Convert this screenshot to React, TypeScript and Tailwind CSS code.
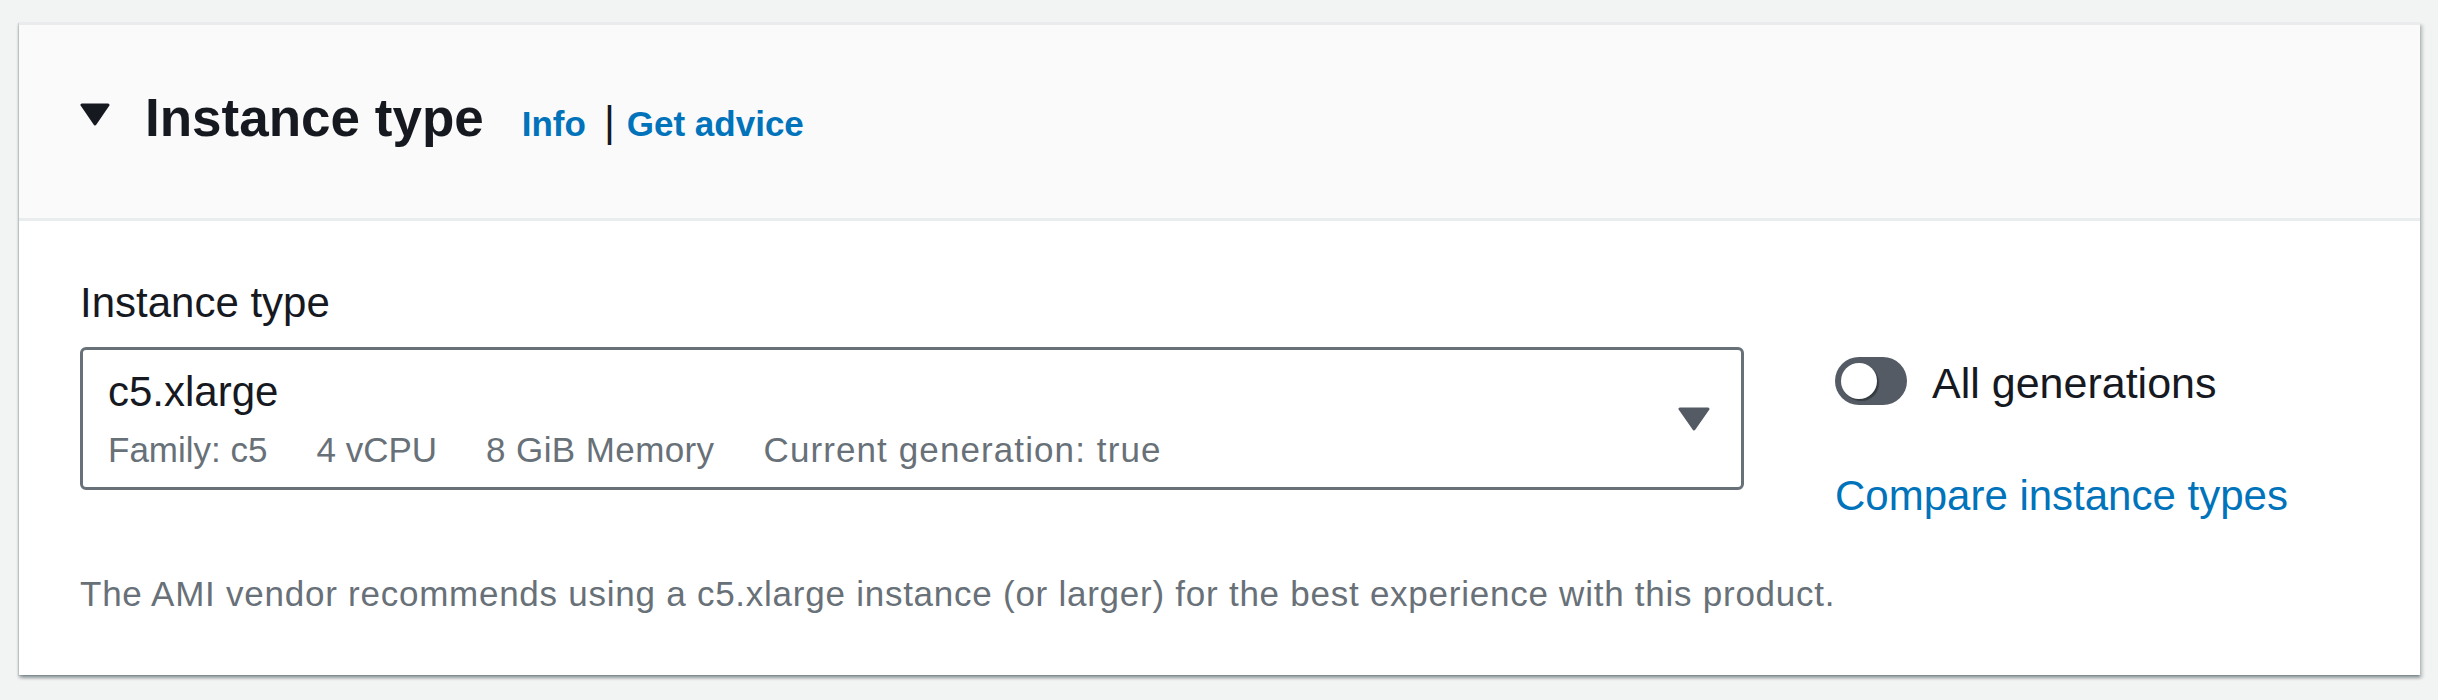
import React from "react";

function Caret({ w, h, color }: { w: number; h: number; color: string }) {
  return (
    <svg width={w} height={h} viewBox={`0 0 ${w} ${h}`} className="shrink-0">
      <path
        d={`M2 2 H${w - 2} L${w / 2} ${h - 2} Z`}
        fill={color}
        stroke={color}
        strokeWidth={3}
        strokeLinejoin="round"
      />
    </svg>
  );
}

export default function App() {
  return (
    <div
      className="w-[2438px] h-[700px] bg-[#f2f3f3] pt-[22px] pl-[19px]"
      style={{ fontFamily: '"Liberation Sans", Arial, sans-serif' }}
    >
      <div className="w-[2401px] bg-white border-t-[3px] border-[#e9ebed] shadow-[0_3px_3px_0_rgba(0,28,36,0.3),3px_3px_3px_0_rgba(0,28,36,0.15),-1px_1px_1px_0_rgba(0,28,36,0.12)]">
        {/* Header */}
        <div className="h-[196px] bg-[#fafafa] border-b-[3px] border-[#eaeded] flex items-center pl-[61px] pb-[8px]">
          <div className="mb-[6px]">
            <Caret w={30} h={23} color="#16191f" />
          </div>
          <div className="flex items-baseline ml-[35px]">
            <h2 className="text-[53px] leading-[60px] font-bold text-[#16191f]">Instance type</h2>
            <div className="flex items-baseline ml-[38px]">
              <span className="text-[35px] leading-[40px] font-bold text-[#0073bb]">Info</span>
              <span className="text-[42px] leading-[40px] text-[#16191f] ml-[18px] mr-[12px]">|</span>
              <span className="text-[35px] leading-[40px] font-bold text-[#0073bb]">Get advice</span>
            </div>
          </div>
        </div>

        {/* Body */}
        <div className="pl-[61px] pt-[58px] pb-[61px]">
          <div className="flex items-start">
            <div className="w-[1664px]">
              <div className="text-[42px] leading-[48px] text-[#16191f]">Instance type</div>
              <div className="mt-[20px] h-[143px] border-[3px] border-[#687078] rounded-[6px] flex items-center justify-between pl-[25px] pr-[31px]">
                <div className="flex flex-col">
                  <div className="text-[42px] leading-[48px] text-[#16191f]">c5.xlarge</div>
                  <div className="mt-[14px] flex gap-[49px] text-[35px] leading-[40px] text-[#687078]">
                    <span>Family: c5</span>
                    <span>4 vCPU</span>
                    <span className="tracking-[0.4px]">8 GiB Memory</span>
                    <span className="tracking-[1.1px]">Current generation: true</span>
                  </div>
                </div>
                <Caret w={32} h={24} color="#545b64" />
              </div>
            </div>

            <div className="ml-[91px] pt-[76px] flex flex-col">
              <div className="flex items-center">
                <div className="w-[72px] h-[48px] rounded-full bg-[#545b64] flex items-center pl-[6px]">
                  <div className="w-[36px] h-[36px] rounded-full bg-white shadow-[2px_2px_1px_0_rgba(0,0,0,0.35)]" />
                </div>
                <span className="ml-[25px] mt-[4px] text-[43px] leading-[48px] text-[#16191f]">All generations</span>
              </div>
              <div className="mt-[65px] text-[42px] leading-[48px] text-[#0073bb]">Compare instance types</div>
            </div>
          </div>

          <div className="mt-[54px] text-[35px] leading-[40px] tracking-[0.75px] text-[#687078]">
            The AMI vendor recommends using a c5.xlarge instance (or larger) for the best experience with this product.
          </div>
        </div>
      </div>
    </div>
  );
}
